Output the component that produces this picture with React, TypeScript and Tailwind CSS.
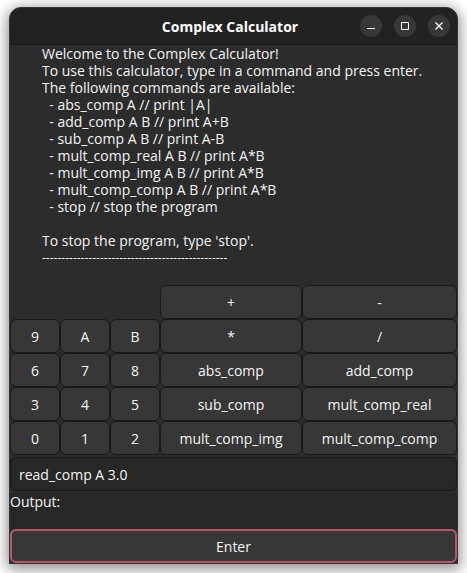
import { useState } from "react";

const introLines = [
  "Welcome to the Complex Calculator!",
  "To use this calculator, type in a command and press enter.",
  "The following commands are available:",
  "  - abs_comp A // print |A|",
  "  - add_comp A B // print A+B",
  "  - sub_comp A B // print A-B",
  "  - mult_comp_real A B // print A*B",
  "  - mult_comp_img A B // print A*B",
  "  - mult_comp_comp A B // print A*B",
  "  - stop // stop the program",
  "",
  "To stop the program, type 'stop'.",
];

const keyRows = [
  ["", "", "", "+", "-"],
  ["9", "A", "B", "*", "/"],
  ["6", "7", "8", "abs_comp", "add_comp"],
  ["3", "4", "5", "sub_comp", "mult_comp_real"],
  ["0", "1", "2", "mult_comp_img", "mult_comp_comp"],
];

function WindowButton({ label, path }: { label: string; path: string }) {
  return (
    <button
      type="button"
      aria-label={label}
      className="flex size-[22px] items-center justify-center rounded-full bg-[#373737] text-white"
    >
      <svg viewBox="0 0 16 16" className="size-4" fill="none" stroke="currentColor">
        <path d={path} strokeWidth={label === "Close" ? 1.4 : 1} />
      </svg>
    </button>
  );
}

function Key({ label, onPress }: { label: string; onPress: (label: string) => void }) {
  return (
    <button
      type="button"
      onClick={() => onPress(label)}
      className="h-[34px] rounded-md border border-[#191919] bg-[#373737] text-center"
    >
      {label}
    </button>
  );
}

export default function App() {
  const [command, setCommand] = useState("read_comp A 3.0");

  return (
    <div className="bg-white px-[9px] pt-[7px] pb-[9px] font-['Open_Sans','Noto_Sans',sans-serif] text-sm leading-[17px] text-[#f4f4f4]">
      <main className="overflow-hidden rounded-t-xl border border-[#353535] bg-[#2c2c2c] shadow-[0_3px_14px_2px_rgba(0,0,0,0.45)]">
        <header className="grid h-[37px] grid-cols-[1fr_auto_1fr] items-center border-b border-[#191919] bg-[#222222] pr-[7px]">
          <h1 className="col-start-2 font-bold text-white">Complex Calculator</h1>
          <div className="flex justify-end gap-3">
            <WindowButton label="Minimize" path="M4 10.5h8" />
            <WindowButton label="Maximize" path="M4.5 4.5h7v7h-7z" />
            <WindowButton label="Close" path="M4.5 4.5l7 7M11.5 4.5l-7 7" />
          </div>
        </header>

        <div className="px-8 pb-[19px] whitespace-pre">
          {introLines.map((line, i) => (
            <p key={i} className="h-[17px]">
              {line}
            </p>
          ))}
          <p className="h-[17px] text-xs leading-[17px]">
            ------------------------------------------------
          </p>
        </div>

        <div className="grid grid-cols-[50px_50px_50px_142fr_155fr]">
          {keyRows.flat().map((label, i) =>
            label ? (
              <Key key={i} label={label} onPress={(l) => setCommand(command + l)} />
            ) : (
              <span key={i} />
            ),
          )}
        </div>

        <input
          type="text"
          aria-label="Command"
          value={command}
          onChange={(e) => setCommand(e.target.value)}
          className="my-0.5 block h-[34px] w-full rounded-md border border-[#191919] bg-[#272727] px-2"
        />
        <output className="block h-9 bg-[#272727]">Output:</output>
        <button
          type="button"
          className="block h-[34px] w-full rounded-md border-2 border-[#b35867] bg-[#373737] text-center"
        >
          Enter
        </button>
      </main>
    </div>
  );
}
